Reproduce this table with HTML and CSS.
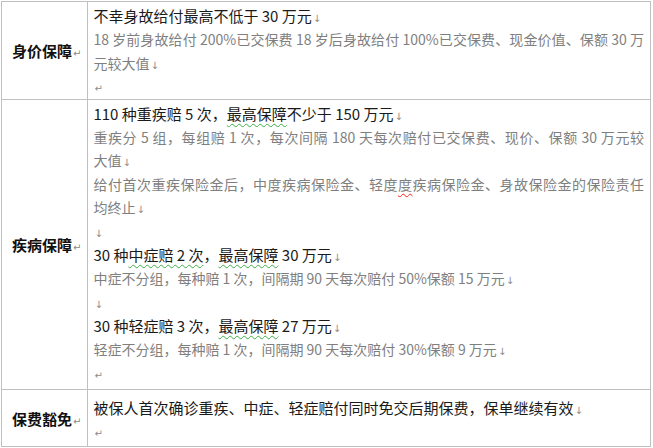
FILE: index.html
```html
<!DOCTYPE html>
<html lang="zh-CN">
<head>
    <meta charset="UTF-8">
    <meta name="viewport" content="width=device-width, initial-scale=1.0">
    <title>保障责任</title>
    <link rel="stylesheet" href="styles.css">
</head>
<body>
    <table class="sheet">
        <colgroup>
            <col class="col-label">
            <col>
        </colgroup>
        <tr class="row-life">
            <th>身价保障<span class="mark">↵</span></th>
            <td>
                <div class="main">不幸身故给付最高不低于 30 万元<span class="mark">↓</span></div>
                <div class="note fill">18 岁前身故给付 200%已交保费 18 岁后身故给付 100%已交保费、现金价值、保额 30 万</div>
                <div class="note">元较大值<span class="mark">↓</span></div>
                <div class="note"><span class="mark">↵</span></div>
            </td>
        </tr>
        <tr class="row-ill">
            <th>疾病保障<span class="mark">↵</span></th>
            <td>
                <div class="main">110 种重疾赔 5 次，<span class="green">最高保障</span>不少于 150 万元<span class="mark">↓</span></div>
                <div class="note fill">重疾分 5 组，每组赔 1 次，每次间隔 180 天每次赔付已交保费、现价、保额 30 万元较</div>
                <div class="note">大值<span class="mark">↓</span></div>
                <div class="note fill">给付首次重疾保险金后，中度疾病保险金、轻度<span class="red">度</span>疾病保险金、身故保险金的保险责任</div>
                <div class="note">均终止<span class="mark">↓</span></div>
                <div class="note"><span class="mark">↓</span></div>
                <div class="main">30 种<span class="green">中症赔 2 次</span>，<span class="green">最高保障</span> 30 万元<span class="mark">↓</span></div>
                <div class="note">中症不分组，每种赔 1 次，间隔期 90 天每次赔付 50%保额 15 万元<span class="mark">↓</span></div>
                <div class="note"><span class="mark">↓</span></div>
                <div class="main">30 种轻症赔 3 次，<span class="green">最高保障</span> 27 万元<span class="mark">↓</span></div>
                <div class="note">轻症不分组，每种赔 1 次，间隔期 90 天每次赔付 30%保额 9 万元<span class="mark">↓</span></div>
                <div class="note"><span class="mark">↵</span></div>
            </td>
        </tr>
        <tr class="row-waive">
            <th>保费豁免<span class="mark">↵</span></th>
            <td>
                <div class="main">被保人首次确诊重疾、中症、轻症赔付同时免交后期保费，保单继续有效<span class="mark">↓</span></div>
                <div class="note"><span class="mark">↵</span></div>
            </td>
        </tr>
    </table>
</body>
</html>
```

FILE: styles.css
```css
body {
    margin: 0;
    background-color: #ffffff;
    font-family: "Noto Sans CJK SC", "Noto Sans", sans-serif;
    color: #1a1a1a;
}

.sheet {
    border-collapse: collapse;
    width: 650px;
    margin: 1px 0 0 1px;
}

.col-label {
    width: 81px;
}

.sheet th,
.sheet td {
    border: 1px solid #c0c0c0;
    padding: 2px 6px 0 5px;
}

.sheet th {
    vertical-align: middle;
    text-align: left;
    padding-left: 10px;
    font-size: 15px;
    line-height: 20px;
    font-weight: bold;
    color: #111111;
    white-space: nowrap;
}

.sheet td {
    vertical-align: top;
}

.row-ill td {
    padding-bottom: 4px;
}

.row-waive td {
    padding-top: 6px;
    padding-bottom: 2px;
}

.main {
    height: 24px;
    font-size: 15px;
    line-height: 24px;
    color: #1a1a1a;
    white-space: nowrap;
}

.note {
    height: 23.5px;
    font-size: 14px;
    line-height: 23.5px;
    color: #7f7f7f;
    white-space: nowrap;
}

.fill {
    text-align: justify;
    text-align-last: justify;
}

.mark {
    font-family: "DejaVu Sans", sans-serif;
    font-size: 10px;
    line-height: 0;
    font-weight: normal;
    color: #8a8a8a;
    margin-left: 1px;
}

.green {
    text-decoration: underline wavy #3cb043;
    text-decoration-thickness: 1px;
    text-underline-offset: 3px;
}

.red {
    text-decoration: underline wavy #ff2020;
    text-decoration-thickness: 1px;
    text-underline-offset: 3px;
}
```
